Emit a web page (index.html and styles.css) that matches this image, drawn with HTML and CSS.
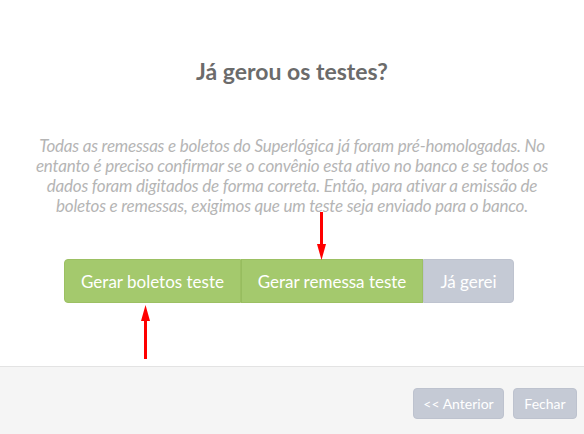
FILE: index.html
```html
<!DOCTYPE html>
<html lang="pt-BR">
<head>
<meta charset="utf-8">
<title>Já gerou os testes?</title>
<link rel="stylesheet" href="styles.css">
</head>
<body>
<div class="modal">
  <div class="modal-body">
    <h2 class="title">Já gerou os testes?</h2>
    <p class="desc">Todas as remessas e boletos do Superlógica já foram pré-homologadas. No entanto é preciso confirmar se o convênio esta ativo no banco e se todos os dados foram digitados de forma correta. Então, para ativar a emissão de boletos e remessas, exigimos que um teste seja enviado para o banco.</p>
    <div class="actions">
      <div class="btn-group">
        <button class="btn btn-green btn-first">Gerar boletos teste</button>
        <button class="btn btn-green btn-mid">Gerar remessa teste</button>
        <button class="btn btn-gray btn-last">Já gerei</button>
        <svg class="arrow arrow-down" width="11" height="50" viewBox="0 0 11 50"><rect x="4" y="0" width="3" height="34" fill="#ff0000"/><polygon points="1,32 10,32 5.5,48" fill="#ff0000"/></svg>
        <svg class="arrow arrow-up" width="11" height="54" viewBox="0 0 11 54"><rect x="4" y="14" width="3" height="40" fill="#ff0000"/><polygon points="1,16 10,16 5.5,0" fill="#ff0000"/></svg>
      </div>
    </div>
  </div>
  <div class="modal-footer">
    <button class="fbtn fbtn-prev">&lt;&lt; Anterior</button>
    <button class="fbtn fbtn-close">Fechar</button>
  </div>
</div>
</body>
</html>
```
FILE: styles.css
```css
html, body {
  margin: 0;
  padding: 0;
  background: #ffffff;
}
body {
  font-family: Lato, "Open Sans", sans-serif;
  width: 584px;
  height: 434px;
  overflow: hidden;
}
.modal {
  display: flex;
  flex-direction: column;
  height: 434px;
}
.modal-body {
  height: 366px;
  display: flex;
  flex-direction: column;
  align-items: center;
}
.title {
  margin: 57px 0 0 0;
  font-size: 23px;
  line-height: 28px;
  font-weight: 700;
  color: #6b6b6b;
}
.desc {
  margin: 51px 0 0 0;
  width: 532px;
  text-align: center;
  font-style: italic;
  font-size: 17px;
  line-height: 20px;
  letter-spacing: -0.2px;
  color: #b5b5b5;
}
.actions {
  margin-top: 43px;
  display: flex;
  justify-content: center;
  width: 100%;
}
.btn-group {
  position: relative;
  display: flex;
  margin-left: -6px;
}
.btn {
  font-family: Lato, "Open Sans", sans-serif;
  font-size: 17px;
  color: #ffffff;
  border: 1px solid transparent;
  height: 44px;
  padding: 0 12px;
  margin: 0;
  cursor: pointer;
}
.btn-green {
  background: #a4c96d;
  border-color: #9cc063;
}
.btn-gray {
  background: #c5cad5;
  border-color: #bec3cf;
}
.btn-first {
  width: 177px;
  border-radius: 4px 0 0 4px;
}
.btn-mid {
  width: 182px;
  border-left: 1px solid #97bd5f;
}
.btn-last {
  width: 91px;
  border-radius: 0 4px 4px 0;
}
.arrow {
  position: absolute;
}
.arrow-down {
  left: 252px;
  top: -47px;
}
.arrow-up {
  left: 76px;
  top: 46px;
}
.modal-footer {
  flex: 1;
  background: #f5f5f5;
  border-top: 1px solid #e3e3e3;
  display: flex;
  justify-content: flex-end;
  align-items: flex-start;
  gap: 9px;
  padding: 21px 7px 0 0;
}
.fbtn {
  font-family: Lato, "Open Sans", sans-serif;
  font-size: 14px;
  color: #ffffff;
  background: #c5cad5;
  border: 1px solid #bdc2ce;
  border-radius: 4px;
  height: 31px;
  padding: 0;
  margin: 0;
}
.fbtn-prev {
  width: 91px;
}
.fbtn-close {
  width: 64px;
}
```
